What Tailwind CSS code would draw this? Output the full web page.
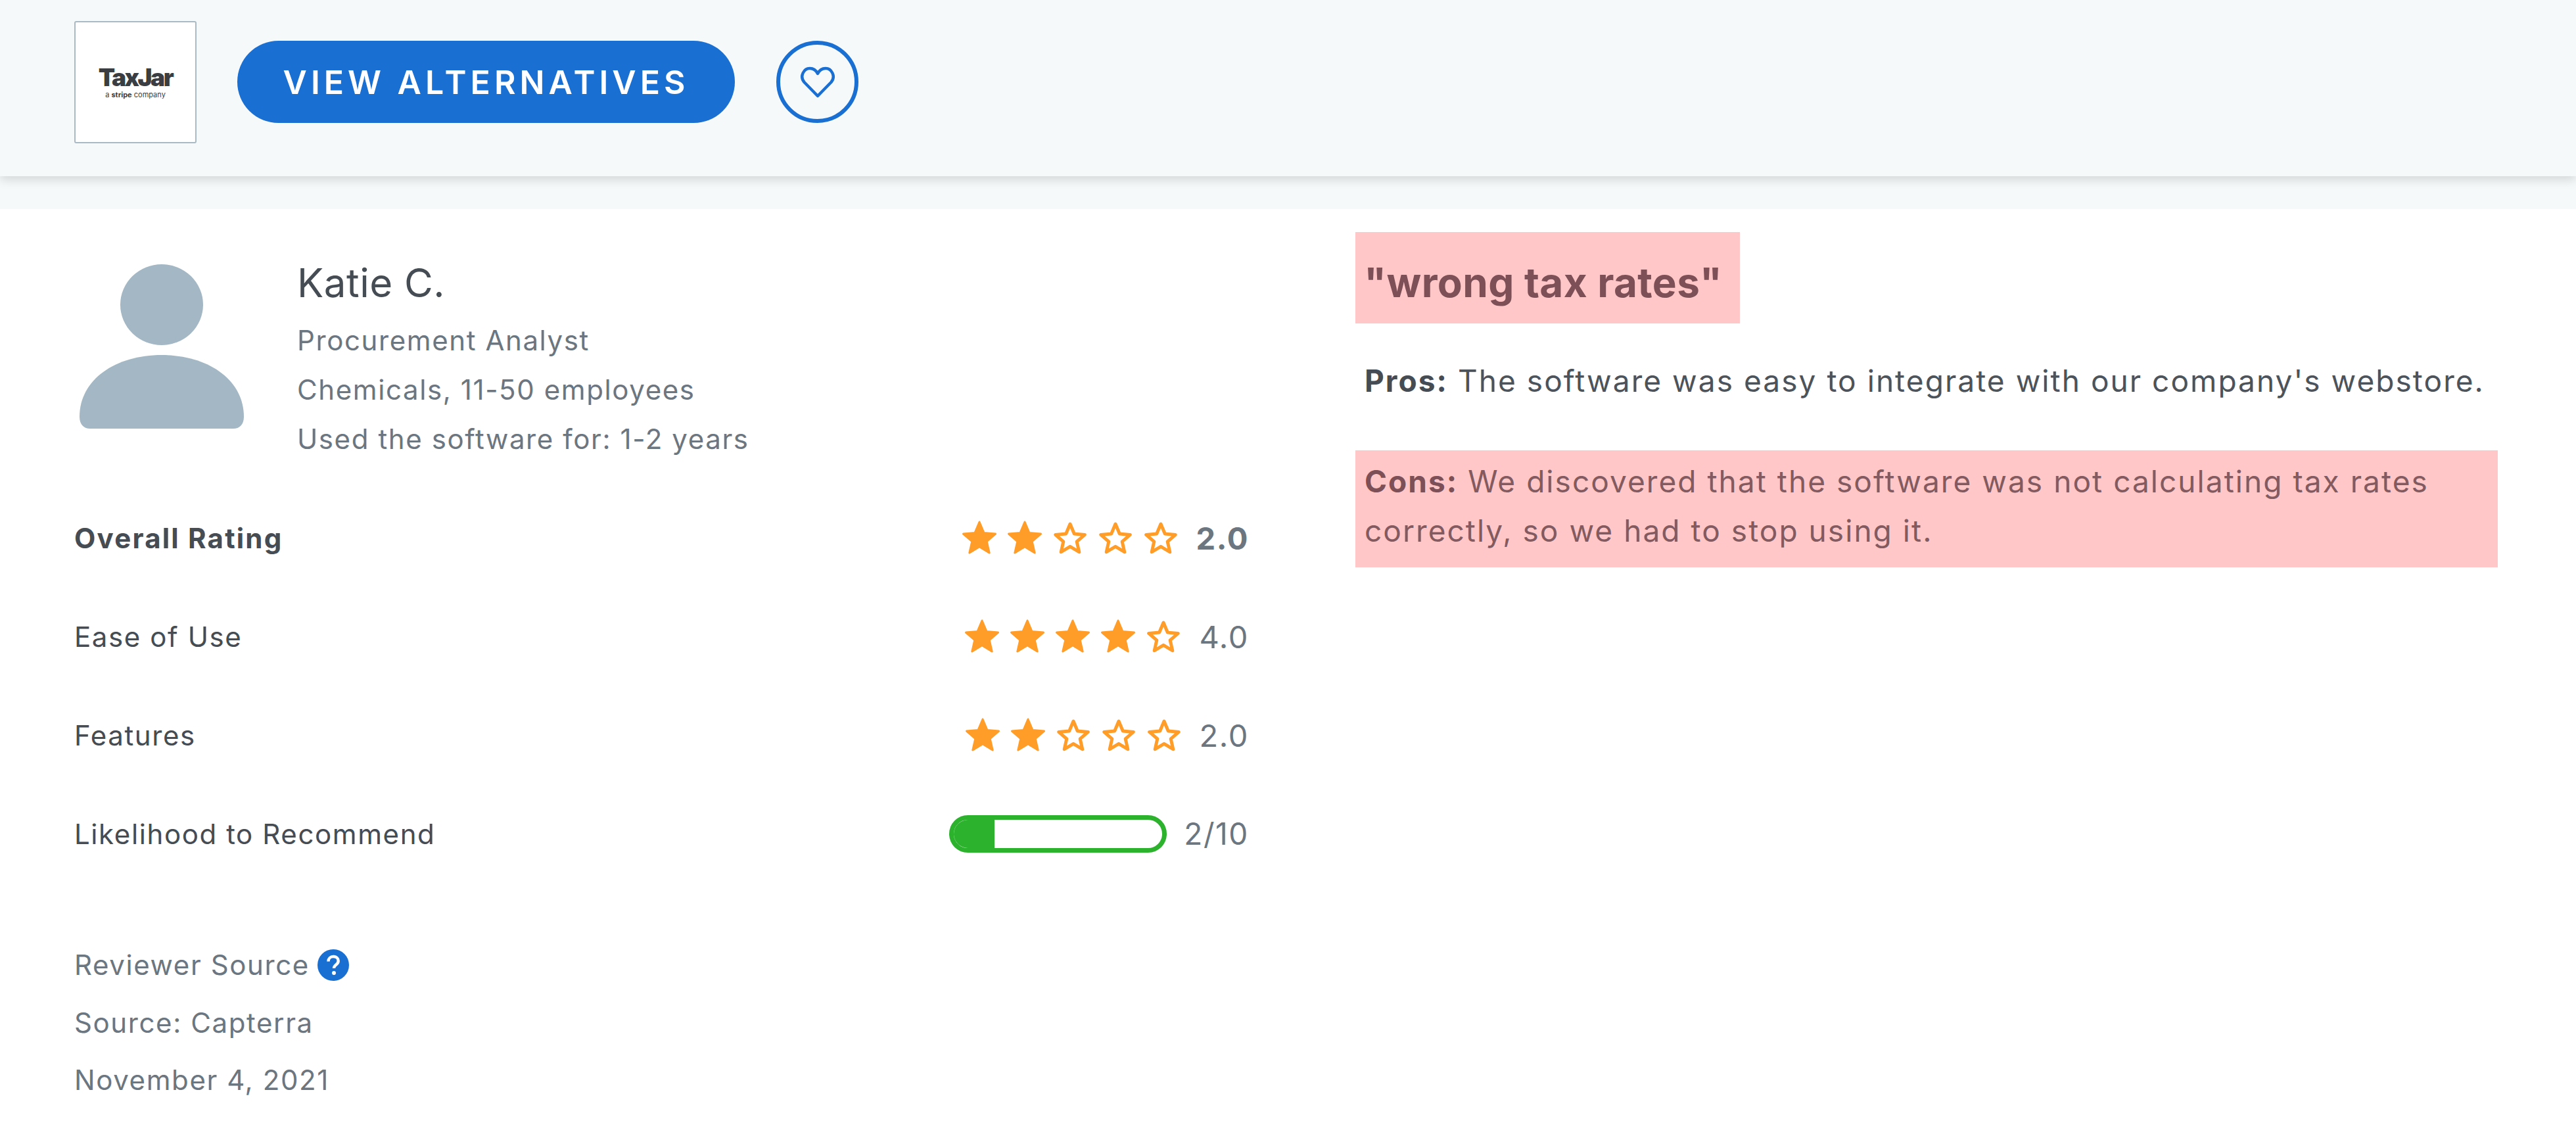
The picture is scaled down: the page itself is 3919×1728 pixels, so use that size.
<!DOCTYPE html>
<html lang="en">
<head>
  <meta charset="UTF-8" />
  <title>TaxJar review</title>
  <script src="https://cdn.jsdelivr.net/npm/@tailwindcss/browser@4"></script>
</head>
<body class="bg-white font-['Inter',sans-serif] text-[42px] leading-[75px] tracking-[1.6px] text-[#6b7680] overflow-hidden">
  <svg class="hidden">
    <symbol id="star-full" viewBox="0 0 54 54"><path d="M27 3l7 16.500 17.500 1.500-13.300 11.500 4 17.500L27 40.800 11.800 50l4-17.500L2.500 21 20 19.500z" fill="#ff9d28" stroke="#ff9d28" stroke-width="3" stroke-linejoin="round"/></symbol>
    <symbol id="star-empty" viewBox="0 0 54 54"><path d="M27 6l6.300 15 16 1.400-12.100 10.500 3.600 15.800L27 40.300l-13.800 8.400 3.600-15.800L4.700 22.400l16-1.400z" fill="none" stroke="#ff9d28" stroke-width="5" stroke-linejoin="round"/></symbol>
  </svg>

  <!-- Top bar -->
  <div class="bg-[#f6f9fa] h-[318px]">
    <div class="h-[268px] pl-[113px] pt-[32px] flex items-start shadow-[0_6px_14px_rgba(0,0,0,0.13)]">
      <div class="w-[186px] h-[186px] bg-white border-2 border-[#a9bac4] rounded-[3px] flex flex-col items-center pt-[64px]">
        <div class="font-black text-[#3a3d42] text-[37px] leading-[40px] tracking-[-2.5px]">TaxJar</div>
        <div class="text-[#3a3d42] text-[11px] leading-[12px] tracking-normal">a <b>stripe</b> company</div>
      </div>
      <button class="mt-[30px] ml-[62px] w-[757px] h-[125px] rounded-full bg-[#1a6fd2] text-white font-semibold text-[50px] leading-none tracking-[6px]">VIEW ALTERNATIVES</button>
      <div class="mt-[30px] ml-[63px] w-[125px] h-[125px] rounded-full border-[6px] border-[#1a6fd2] flex items-center justify-center">
        <svg width="54" height="50" viewBox="0 0 54 50" fill="none" stroke="#1a6fd2" stroke-width="4.500" stroke-linejoin="round"><path d="M27 46L6.500 25C-1 16 6 4 15 4c5.500 0 9.500 3 12 8 2.500-5 6.500-8 12-8 9 0 16 12 8.500 21z"/></svg>
      </div>
    </div>
  </div>

  <div class="flex">
    <!-- Reviewer column -->
    <div class="w-[1787px] ml-[113px] pt-[75px] shrink-0">
      <div class="flex">
        <svg class="ml-[8px] mt-[9px] shrink-0" width="250" height="250" viewBox="0 0 250 250" fill="#a3b8c4">
          <ellipse cx="125" cy="61.500" rx="63" ry="61.500"/>
          <path d="M0 232C0 175 55 138 125 138s125 37 125 94c0 12-7 18-16 18H16C7 250 0 244 0 232z"/>
        </svg>
        <div class="ml-[81px]">
          <div class="text-[60px] text-[#454c53] tracking-[0.5px]">Katie C.</div>
          <div class="mt-[12px]">Procurement Analyst</div>
          <div>Chemicals, 11-50 employees</div>
          <div>Used the software for: 1-2 years</div>
        </div>
      </div>

      <div class="mt-[38px]">
        <div class="h-[150px] flex items-center justify-between">
          <span class="font-bold tracking-[2.2px] text-[#454c53]">Overall Rating</span>
          <div class="flex items-center">
            <svg class="w-[54px] h-[54px] mr-[15px]"><use href="#star-full"/></svg>
            <svg class="w-[54px] h-[54px] mr-[15px]"><use href="#star-full"/></svg>
            <svg class="w-[54px] h-[54px] mr-[15px]"><use href="#star-empty"/></svg>
            <svg class="w-[54px] h-[54px] mr-[15px]"><use href="#star-empty"/></svg>
            <svg class="w-[54px] h-[54px] mr-[27px]"><use href="#star-empty"/></svg>
            <span class="font-bold text-[47px]">2.0</span>
          </div>
        </div>
        <div class="h-[150px] flex items-center justify-between">
          <span class="text-[#454c53]">Ease of Use</span>
          <div class="flex items-center">
            <svg class="w-[54px] h-[54px] mr-[15px]"><use href="#star-full"/></svg>
            <svg class="w-[54px] h-[54px] mr-[15px]"><use href="#star-full"/></svg>
            <svg class="w-[54px] h-[54px] mr-[15px]"><use href="#star-full"/></svg>
            <svg class="w-[54px] h-[54px] mr-[15px]"><use href="#star-full"/></svg>
            <svg class="w-[54px] h-[54px] mr-[27px]"><use href="#star-empty"/></svg>
            <span class="text-[47px]">4.0</span>
          </div>
        </div>
        <div class="h-[150px] flex items-center justify-between">
          <span class="text-[#454c53]">Features</span>
          <div class="flex items-center">
            <svg class="w-[54px] h-[54px] mr-[15px]"><use href="#star-full"/></svg>
            <svg class="w-[54px] h-[54px] mr-[15px]"><use href="#star-full"/></svg>
            <svg class="w-[54px] h-[54px] mr-[15px]"><use href="#star-empty"/></svg>
            <svg class="w-[54px] h-[54px] mr-[15px]"><use href="#star-empty"/></svg>
            <svg class="w-[54px] h-[54px] mr-[27px]"><use href="#star-empty"/></svg>
            <span class="text-[47px]">2.0</span>
          </div>
        </div>
        <div class="h-[150px] flex items-center justify-between">
          <span class="text-[#454c53]">Likelihood to Recommend</span>
          <div class="flex items-center">
            <div class="w-[331px] h-[57px] rounded-full border-[7px] border-[#2db22d] overflow-hidden mr-[26px]">
              <div class="w-[62px] h-full bg-[#2db22d]"></div>
            </div>
            <span class="text-[46px]">2/10</span>
          </div>
        </div>
      </div>

      <div class="mt-[81px] leading-[87.500px]">
        <div class="flex items-center">
          Reviewer Source
          <svg class="ml-[12px]" width="48" height="48" viewBox="0 0 48 48">
            <circle cx="24" cy="24" r="24" fill="#1a6fd2"/>
            <path d="M16.500 18.500c0-4.500 3.300-7.500 7.700-7.500s7.500 2.800 7.500 6.700c0 5.800-6.700 5.600-6.700 11" fill="none" stroke="#fff" stroke-width="4.500"/>
            <circle cx="25" cy="36" r="3" fill="#fff"/>
          </svg>
        </div>
        <div>Source: Capterra</div>
        <div>November 4, 2021</div>
      </div>
    </div>

    <!-- Review text column -->
    <div class="ml-[162px] w-[1738px] pt-[35px] text-[#4c535a] text-[46px] tracking-[2.05px]">
      <div class="inline-block bg-[#ffc7c7] pl-[13px] w-[585px] h-[139px] leading-[154px] text-[62px] tracking-[0.4px] font-bold text-[#7d4f56]">"wrong tax rates"</div>
      <p class="mt-[50px] pl-[14px] pr-[15px]"><b class="font-bold text-[#454c53]">Pros:</b> The software was easy to integrate with our company's webstore.</p>
      <p class="mt-[68px] bg-[#ffc7c7] pl-[14px] pr-[15px] pt-[10px] pb-[18px] leading-[75px] text-[#825a60]"><b class="font-bold text-[#7d4f56]">Cons:</b> We discovered that the software was not calculating tax rates correctly, so we had to stop using it.</p>
    </div>
  </div>
</body>
</html>
